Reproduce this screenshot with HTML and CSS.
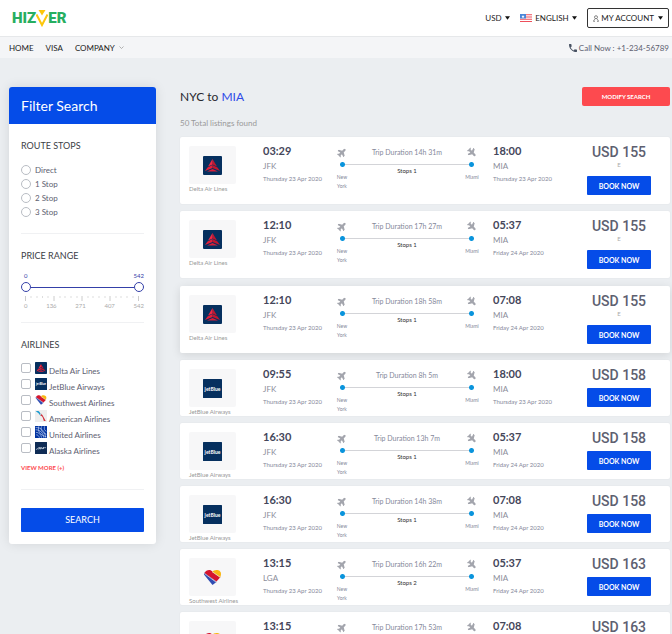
FILE: index.html
```html
<!DOCTYPE html>
<html lang="en">
<head>
<meta charset="utf-8">
<meta name="viewport" content="width=device-width, initial-scale=1">
<title>Hizver - Flights NYC to MIA</title>
<link rel="stylesheet" href="styles.css">
</head>
<body>
<svg class="sprite" aria-hidden="true">
  <symbol id="plane" viewBox="0 0 576 512"><path d="M480 192H365.71L260.61 8.06A16 16 0 0 0 246.71 0h-65.5c-10.63 0-18.3 10.17-15.38 20.39L214.86 192H112l-43.2-57.6c-3.02-4.03-7.77-6.4-12.8-6.4H16.01C5.6 128-2.04 137.78.49 147.88L32 256 .49 364.12C-2.04 374.22 5.6 384 16.01 384H56c5.04 0 9.78-2.37 12.8-6.4L112 320h102.86l-49.03 171.6c-2.92 10.22 4.75 20.4 15.38 20.4h65.5c5.74 0 11.04-3.08 13.89-8.06L365.71 320H480c35.35 0 96-28.65 96-64s-60.65-64-96-64z"/></symbol>
  <symbol id="caret" viewBox="0 0 6 4"><path d="M0 0h6L3 4z"/></symbol>
  <symbol id="delta" viewBox="0 0 38 38"><rect width="38" height="38" rx="2" fill="#06305f"/><path d="M19 6l9 15-9-4z" fill="#c0172f"/><path d="M19 6l-9 15 9-4z" fill="#f02a45"/><path d="M9 23l10-5v6L4 30z" fill="#e51f3a"/><path d="M29 23l-10-5v6l15 6z" fill="#c0172f"/><path d="M8 31l11-5 11 5z" fill="#d81f3a"/></symbol>
  <symbol id="jetblue" viewBox="0 0 38 38"><rect width="38" height="38" rx="1" fill="#06305f"/><text x="19" y="23" text-anchor="middle" font-size="10" font-weight="700" fill="#fff">jetBlue</text></symbol>
  <symbol id="southwest" viewBox="0 0 38 38"><path d="M2 13L19 34 27 28 3 9z" fill="#304cb2"/><path d="M3 10C6 3 15 2 19 7L35 18 27 27z" fill="#d5152e"/><path d="M18 8c5-7 19-5 18 4 0 3-1 5-2 7z" fill="#f9b612"/><path d="M3 11l24 18M18 7l17 12" stroke="#ddd" stroke-width="1.500"/></symbol>
  <symbol id="american" viewBox="0 0 38 38"><rect width="38" height="38" rx="1" fill="#ededed"/><path d="M2 3h8c3 0 5 3 7 8l3 7c-4-1-6-3-8-7z" fill="#1b9ad0"/><path d="M17 18c5 1 7 4 8 7l3 10h6L24 17c-2-2-2-4-5-5-2 2-2 4-2 6z" fill="#d42e3a"/><path d="M15 13c2-2 4-2 6 0l-4 7z" fill="#b5c0c8"/></symbol>
  <symbol id="united" viewBox="0 0 38 38"><rect width="38" height="38" rx="1" fill="#0033a0"/><g fill="none" stroke="#cfdcf5" stroke-width="2"><path d="M2 5c18-1 30 12 32 32M2 12c14 0 24 10 26 25M3 20c9 0 16 7 18 17M4 28c5 0 8 3 10 9M12 1C8 16 14 28 36 34M21 1c-4 10 0 20 15 25M30 1c-2 8 0 13 6 16"/></g></symbol>
  <symbol id="alaska" viewBox="0 0 38 38"><rect width="38" height="38" rx="1" fill="#0f2c55"/><path d="M3 24l6-3 5-5-2 7 5-6v6l4-6 1 5 6-6-3 6 5-4h5" fill="none" stroke="#dce6ef" stroke-width="2"/></symbol>
</svg>

<header class="topbar">
  <a class="brand" href="#" aria-label="Hizver">
    <span>HIZ</span>
    <svg viewBox="0 0 24 34" aria-hidden="true"><path d="M5 0h14l-7 11z" fill="#fdc60b"/><path d="M1 9l11 21L23 9" fill="none" stroke="#fdc60b" stroke-width="4"/></svg>
    <span>ER</span>
  </a>
  <div class="tools">
    <label class="picker"><select aria-label="Currency"><option>USD</option></select><svg class="caret"><use href="#caret"/></svg></label>
    <label class="picker">
      <svg class="flag" viewBox="0 0 24 16"><path d="M0 0h24v16H0z" fill="#fff"/><path d="M0 1.500h24M0 6h24M0 10.500h24M0 15h24" stroke="#ee4f5b" stroke-width="2.400"/><path d="M0 0h12v9H0z" fill="#4b86d8"/><path d="M6 2l1 2h2L7.500 5.500 8 8 6 6.500 4 8l.5-2.500L3 4h2z" fill="#fff"/></svg>
      <select aria-label="Language"><option>ENGLISH</option></select><svg class="caret"><use href="#caret"/></svg></label>
    <button class="account" type="button">
      <svg class="user" viewBox="0 0 14 16" fill="none" stroke="#444" stroke-width="1.500"><circle cx="7" cy="5" r="3.500"/><path d="M1.500 15c0-3 1.500-5 3.500-5.500M12.500 15c0-3-1.500-5-3.500-5.500M1.500 14.500h3M9.500 14.500h3"/></svg>
      MY ACCOUNT
      <svg class="caret"><use href="#caret"/></svg>
    </button>
  </div>
</header>

<nav class="nav">
  <div class="links">
    <a href="#">HOME</a>
    <a href="#">VISA</a>
    <a href="#">COMPANY <svg class="chevron" viewBox="0 0 10 6"><path d="M1 1l4 4 4-4" fill="none" stroke="#999" stroke-width="1.500"/></svg></a>
  </div>
  <a class="phone" href="tel:+123456789"><svg viewBox="3 3 18 18" fill="#485263"><path d="M6.620 10.790c1.440 2.830 3.760 5.140 6.590 6.590l2.200-2.200c.27-.27.67-.36 1.020-.24 1.120.37 2.330.57 3.570.57.55 0 1 .45 1 1V20c0 .55-.45 1-1 1-9.390 0-17-7.610-17-17 0-.55.45-1 1-1h3.500c.55 0 1 .45 1 1 0 1.250.2 2.450.57 3.570.11.35.03.74-.25 1.020z"/></svg>Call Now : +1-234-56789</a>
</nav>

<div class="page">
  <aside class="filter">
    <h2>Filter Search</h2>
    <form class="filter-body">
      <fieldset class="stops">
        <legend>ROUTE STOPS</legend>
        <label><input type="radio" name="stops">Direct</label>
        <label><input type="radio" name="stops">1 Stop</label>
        <label><input type="radio" name="stops">2 Stop</label>
        <label><input type="radio" name="stops">3 Stop</label>
      </fieldset>
      <fieldset class="price-range">
        <legend>PRICE RANGE</legend>
        <div class="values"><output>0</output><output>542</output></div>
        <div class="slider">
          <input type="range" min="0" max="542" value="0" aria-label="Minimum price">
          <input type="range" min="0" max="542" value="542" aria-label="Maximum price">
        </div>
        <svg class="ticks" viewBox="0 0 114 5" preserveAspectRatio="none"><path d="M.5 0v5M29 0v5M57 0v5M85 0v5M113.500 0v5" stroke="#ccc"/><path d="M6 0v2M12 0v2M17.500 0v2M23 0v2M35 0v2M40 0v2M46 0v2M52 0v2M63 0v2M68 0v2M74 0v2M80 0v2M91 0v2M96 0v2M102 0v2M108 0v2" stroke="#ddd"/></svg>
        <div class="scale"><span>0</span><span>136</span><span>271</span><span>407</span><span>542</span></div>
      </fieldset>
      <fieldset class="airlines">
        <legend>AIRLINES</legend>
        <label><input type="checkbox"><svg><use href="#delta"/></svg><span>Delta Air Lines</span></label>
        <label><input type="checkbox"><svg><use href="#jetblue"/></svg><span>JetBlue Airways</span></label>
        <label><input type="checkbox"><svg><use href="#southwest"/></svg><span>Southwest Airlines</span></label>
        <label><input type="checkbox"><svg><use href="#american"/></svg><span>American Airlines</span></label>
        <label><input type="checkbox"><svg><use href="#united"/></svg><span>United Airlines</span></label>
        <label><input type="checkbox"><svg><use href="#alaska"/></svg><span>Alaska Airlines</span></label>
        <a class="more" href="#">VIEW MORE (+)</a>
      </fieldset>
      <button class="search" type="submit">SEARCH</button>
    </form>
  </aside>

  <main class="results">
    <div class="heading">
      <h1>NYC to <span>MIA</span></h1>
      <button class="modify" type="button">MODIFY SEARCH</button>
    </div>
    <p class="count">50 Total listings found</p>

    <article class="card">
      <div class="carrier"><div class="tile"><svg><use href="#delta"/></svg></div><p>Delta Air Lines</p></div>
      <div class="point"><b>03:29</b><span>JFK</span><time>Thursday 23 Apr 2020</time></div>
      <div class="route"><svg class="up"><use href="#plane"/></svg><span class="duration">Trip Duration 14h 31m</span><svg class="down"><use href="#plane"/></svg><div class="line"></div><span class="city">New York</span><span class="via">Stops 1</span><span class="city">Miami</span></div>
      <div class="point"><b>18:00</b><span>MIA</span><time>Thursday 23 Apr 2020</time></div>
      <div class="fare"><strong>USD 155</strong><small>E</small><button type="button">BOOK NOW</button></div>
    </article>

    <article class="card">
      <div class="carrier"><div class="tile"><svg><use href="#delta"/></svg></div><p>Delta Air Lines</p></div>
      <div class="point"><b>12:10</b><span>JFK</span><time>Thursday 23 Apr 2020</time></div>
      <div class="route"><svg class="up"><use href="#plane"/></svg><span class="duration">Trip Duration 17h 27m</span><svg class="down"><use href="#plane"/></svg><div class="line"></div><span class="city">New York</span><span class="via">Stops 1</span><span class="city">Miami</span></div>
      <div class="point"><b>05:37</b><span>MIA</span><time>Friday 24 Apr 2020</time></div>
      <div class="fare"><strong>USD 155</strong><small>E</small><button type="button">BOOK NOW</button></div>
    </article>

    <article class="card raised">
      <div class="carrier"><div class="tile"><svg><use href="#delta"/></svg></div><p>Delta Air Lines</p></div>
      <div class="point"><b>12:10</b><span>JFK</span><time>Thursday 23 Apr 2020</time></div>
      <div class="route"><svg class="up"><use href="#plane"/></svg><span class="duration">Trip Duration 18h 58m</span><svg class="down"><use href="#plane"/></svg><div class="line"></div><span class="city">New York</span><span class="via">Stops 1</span><span class="city">Miami</span></div>
      <div class="point"><b>07:08</b><span>MIA</span><time>Friday 24 Apr 2020</time></div>
      <div class="fare"><strong>USD 155</strong><small>E</small><button type="button">BOOK NOW</button></div>
    </article>

    <article class="card">
      <div class="carrier"><div class="tile"><svg><use href="#jetblue"/></svg></div><p>JetBlue Airways</p></div>
      <div class="point"><b>09:55</b><span>JFK</span><time>Thursday 23 Apr 2020</time></div>
      <div class="route"><svg class="up"><use href="#plane"/></svg><span class="duration">Trip Duration 8h 5m</span><svg class="down"><use href="#plane"/></svg><div class="line"></div><span class="city">New York</span><span class="via">Stops 1</span><span class="city">Miami</span></div>
      <div class="point"><b>18:00</b><span>MIA</span><time>Thursday 23 Apr 2020</time></div>
      <div class="fare"><strong>USD 158</strong><button type="button">BOOK NOW</button></div>
    </article>

    <article class="card">
      <div class="carrier"><div class="tile"><svg><use href="#jetblue"/></svg></div><p>JetBlue Airways</p></div>
      <div class="point"><b>16:30</b><span>JFK</span><time>Thursday 23 Apr 2020</time></div>
      <div class="route"><svg class="up"><use href="#plane"/></svg><span class="duration">Trip Duration 13h 7m</span><svg class="down"><use href="#plane"/></svg><div class="line"></div><span class="city">New York</span><span class="via">Stops 1</span><span class="city">Miami</span></div>
      <div class="point"><b>05:37</b><span>MIA</span><time>Friday 24 Apr 2020</time></div>
      <div class="fare"><strong>USD 158</strong><button type="button">BOOK NOW</button></div>
    </article>

    <article class="card">
      <div class="carrier"><div class="tile"><svg><use href="#jetblue"/></svg></div><p>JetBlue Airways</p></div>
      <div class="point"><b>16:30</b><span>JFK</span><time>Thursday 23 Apr 2020</time></div>
      <div class="route"><svg class="up"><use href="#plane"/></svg><span class="duration">Trip Duration 14h 38m</span><svg class="down"><use href="#plane"/></svg><div class="line"></div><span class="city">New York</span><span class="via">Stops 1</span><span class="city">Miami</span></div>
      <div class="point"><b>07:08</b><span>MIA</span><time>Friday 24 Apr 2020</time></div>
      <div class="fare"><strong>USD 158</strong><button type="button">BOOK NOW</button></div>
    </article>

    <article class="card">
      <div class="carrier"><div class="tile"><svg><use href="#southwest"/></svg></div><p>Southwest Airlines</p></div>
      <div class="point"><b>13:15</b><span>LGA</span><time>Thursday 23 Apr 2020</time></div>
      <div class="route"><svg class="up"><use href="#plane"/></svg><span class="duration">Trip Duration 16h 22m</span><svg class="down"><use href="#plane"/></svg><div class="line"></div><span class="city">New York</span><span class="via">Stops 2</span><span class="city">Miami</span></div>
      <div class="point"><b>05:37</b><span>MIA</span><time>Friday 24 Apr 2020</time></div>
      <div class="fare"><strong>USD 163</strong><button type="button">BOOK NOW</button></div>
    </article>

    <article class="card">
      <div class="carrier"><div class="tile"><svg><use href="#southwest"/></svg></div><p>Southwest Airlines</p></div>
      <div class="point"><b>13:15</b><span>LGA</span><time>Thursday 23 Apr 2020</time></div>
      <div class="route"><svg class="up"><use href="#plane"/></svg><span class="duration">Trip Duration 17h 53m</span><svg class="down"><use href="#plane"/></svg><div class="line"></div><span class="city">New York</span><span class="via">Stops 2</span><span class="city">Miami</span></div>
      <div class="point"><b>07:08</b><span>MIA</span><time>Friday 24 Apr 2020</time></div>
      <div class="fare"><strong>USD 163</strong><button type="button">BOOK NOW</button></div>
    </article>
  </main>
</div>
</body>
</html>
```
FILE: styles.css
```css
* { box-sizing: border-box; }
html { scrollbar-width: none; }
body {
  margin: 0;
  background: #ebeef1;
  color: #5d6070;
  font-family: Lato, "Liberation Sans", sans-serif;
  font-size: 8px;
  line-height: 12px;
}
h1, h2, p, fieldset, legend { margin: 0; padding: 0; border: 0; font-weight: 400; }
a { color: inherit; text-decoration: none; }
button, select, input { margin: 0; font: inherit; color: inherit; }
button { padding: 0; border: 0; border-radius: 1px; cursor: pointer; }
svg { display: block; flex: none; }
.sprite { display: none; }

.topbar {
  display: flex;
  align-items: center;
  justify-content: space-between;
  height: 36px;
  padding: 0 3px 0 12px;
  background: #fff;
}
.brand {
  display: flex;
  align-items: center;
  color: #27ae60;
  font-family: Roboto, "Liberation Sans", sans-serif;
  font-size: 15px;
  font-weight: 900;
  line-height: 18px;
}
.brand svg { width: 12px; height: 17px; }
.tools { display: flex; align-items: center; gap: 10px; color: #222; }
.picker { display: flex; align-items: center; gap: 3px; }
.picker select { appearance: none; padding: 0; border: 0; background: none; }
.caret { width: 5px; height: 4px; fill: #111; }
.flag { width: 12px; height: 8px; }
.account {
  display: flex;
  align-items: center;
  gap: 2px;
  height: 20px;
  padding: 0 5px;
  border: 1px solid #333;
  border-radius: 2px;
  background: #fff;
}
.account .caret { margin-left: 2px; }
.user { width: 6px; height: 7px; }

.nav {
  display: flex;
  align-items: center;
  justify-content: space-between;
  height: 22px;
  padding: 0 3px 0 9px;
  border-top: 1px solid #e6e8ea;
  background: #f4f5f7;
}
.links { display: flex; gap: 12px; color: #222; }
.links a { display: flex; align-items: center; gap: 4px; }
.chevron { width: 5px; height: 3px; }
.phone { display: flex; align-items: center; gap: 2px; }
.phone svg { width: 8px; height: 8px; }

.page {
  display: grid;
  grid-template-columns: 147px minmax(0, 1fr);
  gap: 24px;
  align-items: start;
  padding: 29px 2px 0 9px;
}

.filter {
  overflow: hidden;
  border-radius: 3px;
  background: #fff;
  box-shadow: 0 0 12px #0000001a;
}
.filter h2 {
  padding: 0 12px;
  background: #054ce8;
  color: #fff;
  font-size: 14px;
  line-height: 37px;
}
.filter-body { padding: 16px 12px 12px; }
.filter fieldset { border-bottom: 1px solid #f0f1f3; }
.filter legend { font-size: 9px; line-height: 12px; color: #3c3e46; }
.filter label { display: flex; align-items: center; }
.stops { padding: 11px 0 14px; margin-bottom: 16px; }
.stops label { height: 14px; gap: 4px; }
.filter input[type="radio"], .filter input[type="checkbox"] {
  appearance: none;
  width: 10px;
  height: 10px;
  border: 1px solid #b9bdc4;
  border-radius: 50%;
  background: #fff;
}
.filter input[type="checkbox"] { border-radius: 2px; }
.price-range { padding-bottom: 11px; margin-bottom: 16px; }
.price-range legend { margin-bottom: 9px; }
.values, .scale { display: flex; justify-content: space-between; font-size: 6px; line-height: 10px; }
.values { color: #3440a8; padding-left: 3px; }
.slider { display: grid; align-items: center; height: 12px; }
.slider input {
  grid-area: 1 / 1;
  appearance: none;
  width: 100%;
  height: 12px;
  background: linear-gradient(#3440a8, #3440a8) center / calc(100% - 20px) 1px no-repeat;
  pointer-events: none;
}
.slider input::-webkit-slider-thumb {
  appearance: none;
  width: 10px;
  height: 10px;
  border: 1px solid #3440a8;
  border-radius: 50%;
  background: #fff;
  pointer-events: auto;
}
.ticks { width: calc(100% - 9px); height: 5px; margin: 3px 5px 0 4px; }
.scale { color: #aaa; padding-left: 3px; }
.airlines { padding-bottom: 15px; margin-bottom: 18px; }
.airlines legend { margin-bottom: 9px; }
.airlines label { height: 16px; }
.airlines svg { width: 12px; height: 12px; margin: 0 2px 0 4px; }
.airlines label span { padding-top: 5px; }
.more { display: block; margin-top: 6px; color: #fd4a4f; font-size: 6px; font-weight: 700; }
.search { width: 100%; height: 24px; background: #054ce8; color: #fff; font-size: 9px; }

.heading { display: flex; justify-content: space-between; align-items: center; height: 19px; }
.heading h1 { color: #26282e; font-size: 12px; line-height: 16px; }
.heading h1 span { color: #2f4be8; }
.modify { width: 88px; height: 19px; border-radius: 2px; background: #fd4a4f; color: #fff; font-size: 6px; font-weight: 700; }
.count { margin: 11px 0 8px; color: #999; }

.card {
  display: grid;
  grid-template-columns: 74px 72px minmax(0, 1fr) 94px 64px;
  margin-bottom: 7px;
  padding: 8px 19px 0 9px;
  border-radius: 2px;
  background: #fff;
  box-shadow: 0 0 2px #0000000f;
}
.raised { margin-top: 8px; box-shadow: 0 2px 10px #0000001c; }
.tile {
  display: grid;
  place-items: center;
  width: 47px;
  height: 38px;
  margin-top: 1px;
  border-radius: 2px;
  background: #f7f7f8;
}
.tile svg { width: 19px; height: 19px; }
.carrier p { margin-top: 1px; color: #999; font-size: 6px; line-height: 8px; white-space: nowrap; }
.point { display: flex; flex-direction: column; white-space: nowrap; }
.point b { color: #44465a; font-size: 11px; }
.point span { margin: 3px 0 1px; color: #8b8d99; }
.point time { color: #85889a; font-size: 6px; }
.route {
  display: grid;
  grid-template-columns: 14px 1fr 14px;
  align-content: start;
  justify-items: center;
  margin-right: 14px;
  color: #85889a;
  text-align: center;
}
.route svg { width: 10px; height: 9px; margin-top: 3px; fill: #a3a5ad; }
.up { transform: rotate(-45deg); }
.down { transform: rotate(45deg); }
.duration { font-size: 7px; line-height: 14px; }
.line {
  grid-column: 1 / -1;
  justify-self: stretch;
  height: 5px;
  margin: 3px 5px 0;
  background:
    radial-gradient(circle, #0a94dc 2px, #0a94dc00 3px) left / 5px 5px no-repeat,
    radial-gradient(circle, #0a94dc 2px, #0a94dc00 3px) right / 5px 5px no-repeat,
    linear-gradient(#d3d4d8, #d3d4d8) center / 100% 1px no-repeat;
}
.city { margin-top: 6px; font-size: 5px; line-height: 9px; }
.via { color: #333; font-size: 6px; line-height: 8px; }
.fare { display: flex; flex-direction: column; align-items: center; padding-bottom: 9px; }
.fare strong {
  font-family: Roboto, "Liberation Sans", sans-serif;
  font-size: 14px;
  font-weight: 500;
  line-height: 14px;
  white-space: nowrap;
}
.fare small { color: #aaa; font-size: 6px; line-height: 11px; }
.fare button {
  width: 64px;
  height: 19px;
  margin-top: 6px;
  background: #054ce8;
  color: #fff;
  font-size: 7px;
  font-weight: 700;
}
```
